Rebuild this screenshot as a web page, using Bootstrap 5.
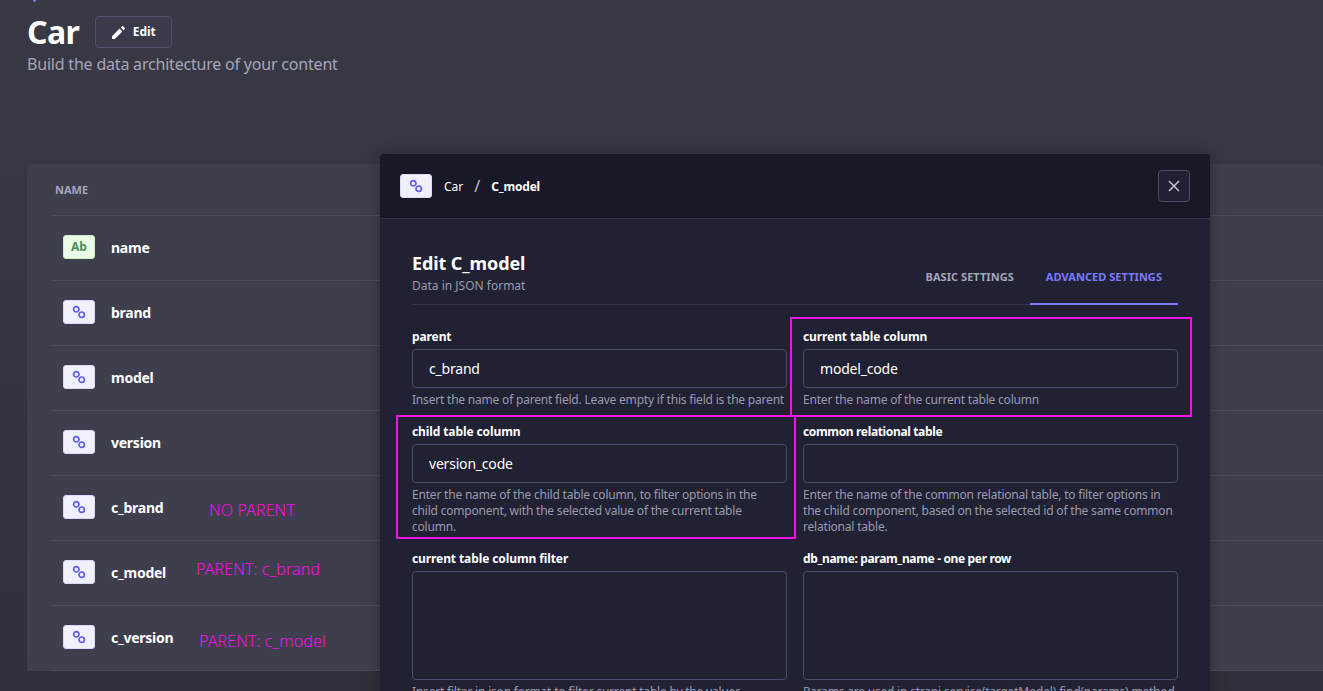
<!DOCTYPE html>
<html lang="en">
<head>
    <meta charset="UTF-8">
    <title>Car - Content-Type Builder</title>
    <link href="https://cdn.jsdelivr.net/npm/bootstrap@5.3.2/dist/css/bootstrap.min.css" rel="stylesheet">
    <style>
        html, body { height: 100%; overflow: hidden; }
        body {
            background: linear-gradient(180deg, #393945 0%, #30303a 100%);
            font-family: "Noto Sans", "Open Sans", sans-serif;
            color: #fff;
        }
        .stage { position: relative; height: 691px; padding: 16px 0 0 27px; }
        .back-dot { position: absolute; left: 33px; top: -2px; width: 3px; height: 4px; background: #7b79ff; border-radius: 50%; }
        .title-row { gap: 16px; height: 32px; }
        .page-title { font-size: 32px; line-height: 34px; font-weight: 700; margin: 0; letter-spacing: -.6px; }
        .edit-btn { width: 77px; height: 32px; border: 1px solid #4f4f6b; border-radius: 4px; background: #3a3a4a; color: #fff; font-size: 12px; font-weight: 700; gap: 8px; padding: 0; }
        .page-sub { font-size: 16px; line-height: 24px; color: #a5a5ba; margin: 4px 0 0; letter-spacing: -.2px; }
        .table-box { margin-top: 88px; width: 1296px; background: #3f3e4c; border-radius: 4px 4px 0 0; padding: 0 0 0 24px; }
        .table-head { height: 51px; padding: 2px 0 0 4px; font-size: 11px; font-weight: 700; color: #a5a5ba; }
        .field-row { height: 65px; border-top: 1px solid #4c4b62; padding: 0 0 2px 12px; gap: 16px; font-size: 14px; font-weight: 700; letter-spacing: -.25px; }
        .field-row:last-child { border-bottom: 1px solid #4c4b62; height: 66px; }
        .type-chip { width: 32px; height: 24px; border-radius: 3px; border: 1px solid #d9d8ff; background: #f0f0ff; flex: none; }
        .type-chip.text-chip { background: #eafbe7; border-color: #c6f0c2; color: #4c8c5a; font-size: 12px; font-weight: 700; letter-spacing: 0; }
        .note { position: absolute; color: #f50fe8; font-size: 16px; line-height: 20px; font-weight: 300; letter-spacing: .1px; }
        .note-1 { left: 209px; top: 500px; }
        .note-2 { left: 196px; top: 559px; }
        .note-3 { left: 199px; top: 631px; }
        .modal-box { position: absolute; left: 380px; top: 154px; width: 830px; height: 600px; background: #212134; border-radius: 4px 4px 0 0; box-shadow: 0 2px 15px rgba(3,3,5,.35); }
        .modal-top { height: 65px; background: #181826; border-bottom: 1px solid #32324d; border-radius: 4px 4px 0 0; padding: 0 20px; font-size: 12px; }
        .crumb-txt { padding-top: 2px; }
        .crumb-sep { margin: 0 11px 0 11px; color: #c0c0cf; font-size: 16px; line-height: 16px; }
        .crumb-now { letter-spacing: -.2px; padding-top: 2px; }
        .close-box { width: 32px; height: 32px; border: 1px solid #4a4a6a; border-radius: 4px; background: #212134; padding: 0; }
        .modal-inner { padding: 32px 32px 0; }
        .form-head { height: 54px; border-bottom: 1px solid #32324d; }
        .form-title { font-size: 18px; line-height: 24px; font-weight: 700; margin: 0; letter-spacing: -.1px; }
        .form-sub { font-size: 12px; line-height: 16px; color: #9a9aae; margin: 3px 0 0; }
        .tab-item { font-size: 11px; font-weight: 700; line-height: 16px; color: #a5a5ba; padding: 11px 16px 18px; text-transform: uppercase; letter-spacing: .05px; border-bottom: 2px solid transparent; margin-bottom: -1px; }
        .tab-item.on { color: #7b79ff; border-bottom-color: #7b79ff; }
        .form-rows { display: grid; grid-template-columns: 375px 375px; column-gap: 16px; margin-top: 24px; }
        .form-cell { margin-bottom: 16px; }
        .form-cell label { display: block; font-size: 12px; line-height: 16px; font-weight: 700; margin-bottom: 4px; letter-spacing: -.1px; }
        .form-cell label.tight { letter-spacing: -.35px; }
        .dark-input { display: block; width: 100%; height: 39px; background: #212134; border: 1px solid #4a4a6a; border-radius: 4px; color: #fff; font-size: 14px; padding: 0 16px; margin-bottom: 4px; box-shadow: none; letter-spacing: -.2px; }
        textarea.dark-input { height: 109px; resize: none; }
        .dark-input:focus { background: #212134; color: #fff; border-color: #4a4a6a; box-shadow: none; }
        .hint { font-size: 12px; line-height: 16px; color: #9a9aae; letter-spacing: -.2px; }
        .mark-box { position: absolute; border: 2px solid #f50fe8; pointer-events: none; }
        .mark-1 { left: 410px; top: 163px; width: 402px; height: 100px; }
        .mark-2 { left: 16px; top: 261px; width: 400px; height: 124px; }
    </style>
</head>
<body>
<svg width="0" height="0" class="position-absolute">
    <symbol id="link-ico" viewBox="0 0 14 14">
        <circle cx="4.3" cy="4.3" r="2.7" fill="none" stroke="#5f5cf0" stroke-width="1.7"/>
        <circle cx="9.7" cy="9.7" r="2.7" fill="none" stroke="#5f5cf0" stroke-width="1.7"/>
    </symbol>
</svg>

<div class="stage">
    <span class="back-dot"></span>
    <div class="title-row d-flex align-items-center">
        <h1 class="page-title">Car</h1>
        <button class="edit-btn d-flex align-items-center justify-content-center" type="button">
            <svg width="13" height="13" viewBox="0 0 12 12"><path d="M0 12V9.4L7 2.4l2.6 2.6L2.6 12zM8 1.4L9.2.2a.7.7 0 0 1 1 0l1.6 1.6a.7.7 0 0 1 0 1L10.6 4z" fill="#fff"/></svg>
            Edit
        </button>
    </div>
    <p class="page-sub">Build the data architecture of your content</p>

    <div class="table-box">
        <div class="table-head d-flex align-items-center">NAME</div>
        <div class="field-row d-flex align-items-center"><span class="type-chip text-chip d-flex align-items-center justify-content-center">Ab</span>name</div>
        <div class="field-row d-flex align-items-center"><span class="type-chip d-flex align-items-center justify-content-center"><svg width="14" height="14"><use href="#link-ico"/></svg></span>brand</div>
        <div class="field-row d-flex align-items-center"><span class="type-chip d-flex align-items-center justify-content-center"><svg width="14" height="14"><use href="#link-ico"/></svg></span>model</div>
        <div class="field-row d-flex align-items-center"><span class="type-chip d-flex align-items-center justify-content-center"><svg width="14" height="14"><use href="#link-ico"/></svg></span>version</div>
        <div class="field-row d-flex align-items-center"><span class="type-chip d-flex align-items-center justify-content-center"><svg width="14" height="14"><use href="#link-ico"/></svg></span>c_brand</div>
        <div class="field-row d-flex align-items-center"><span class="type-chip d-flex align-items-center justify-content-center"><svg width="14" height="14"><use href="#link-ico"/></svg></span>c_model</div>
        <div class="field-row d-flex align-items-center"><span class="type-chip d-flex align-items-center justify-content-center"><svg width="14" height="14"><use href="#link-ico"/></svg></span>c_version</div>
    </div>

    <span class="note note-1">NO PARENT</span>
    <span class="note note-2">PARENT: c_brand</span>
    <span class="note note-3">PARENT: c_model</span>

    <div class="modal-box">
        <div class="modal-top d-flex align-items-center justify-content-between">
            <div class="d-flex align-items-center">
                <span class="type-chip d-flex align-items-center justify-content-center me-2"><svg width="14" height="14"><use href="#link-ico"/></svg></span>
                <span class="ms-1 crumb-txt">Car</span><span class="crumb-sep">/</span><strong class="crumb-now">C_model</strong>
            </div>
            <button class="close-box d-flex align-items-center justify-content-center" type="button" aria-label="Close">
                <svg width="12" height="12" viewBox="0 0 12 12"><path d="M1 1l10 10M11 1L1 11" stroke="#c0c0cf" stroke-width="1.6"/></svg>
            </button>
        </div>
        <div class="modal-inner">
            <div class="form-head d-flex justify-content-between">
                <div>
                    <h2 class="form-title">Edit C_model</h2>
                    <p class="form-sub">Data in JSON format</p>
                </div>
                <div class="d-flex align-items-end">
                    <span class="tab-item">Basic settings</span>
                    <span class="tab-item on">Advanced settings</span>
                </div>
            </div>
            <div class="form-rows">
                <div class="form-cell">
                    <label>parent</label>
                    <input class="form-control dark-input" value="c_brand">
                    <div class="hint text-nowrap">Insert the name of parent field. Leave empty if this field is the parent</div>
                </div>
                <div class="form-cell">
                    <label>current table column</label>
                    <input class="form-control dark-input" value="model_code">
                    <div class="hint">Enter the name of the current table column</div>
                </div>
                <div class="form-cell">
                    <label>child table column</label>
                    <input class="form-control dark-input" value="version_code">
                    <div class="hint">Enter the name of the child table column, to filter options in the<br>child component, with the selected value of the current table<br>column.</div>
                </div>
                <div class="form-cell">
                    <label class="tight">common relational table</label>
                    <input class="form-control dark-input">
                    <div class="hint">Enter the name of the common relational table, to filter options in<br>the child component, based on the selected id of the same common<br>relational table.</div>
                </div>
                <div class="form-cell">
                    <label>current table column filter</label>
                    <textarea class="form-control dark-input"></textarea>
                    <div class="hint">Insert filter in json format to filter current table by the values</div>
                </div>
                <div class="form-cell">
                    <label class="tight">db_name: param_name - one per row</label>
                    <textarea class="form-control dark-input"></textarea>
                    <div class="hint">Params are used in strapi.service(targetModel).find(params) method</div>
                </div>
            </div>
        </div>
        <span class="mark-box mark-1"></span>
        <span class="mark-box mark-2"></span>
    </div>
</div>

<script src="https://cdn.jsdelivr.net/npm/bootstrap@5.3.2/dist/js/bootstrap.bundle.min.js"></script>
</body>
</html>
